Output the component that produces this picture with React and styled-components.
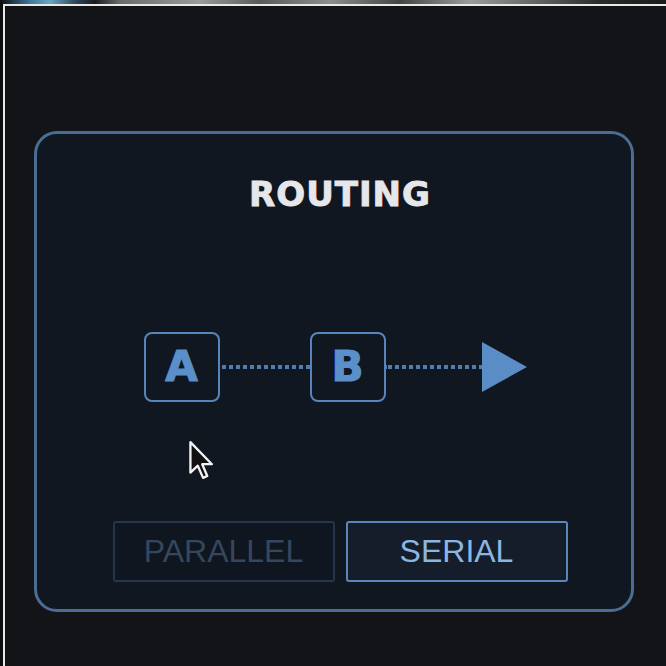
import styled, { createGlobalStyle } from 'styled-components';

const GlobalStyle = createGlobalStyle`
  html, body {
    margin: 0;
    padding: 0;
    background: #131418;
  }
`;

const Frame = styled.div`
  position: relative;
  width: 666px;
  height: 666px;
  box-sizing: border-box;
  padding: 4px 0 0 3px;
  display: flex;
  overflow: hidden;
  background:
    linear-gradient(90deg, #0d0e10 0px, #3f7898 30px, #6aa6c2 50px, #2c4a5c 75px, #1a1b1d 95px,
      #6b6b6b 120px, #9a9a9a 200px, #5a5a5a 260px, #8c8c8c 330px, #444 400px, #9b9b9b 470px,
      #606060 540px, #2a2a2a 600px, #1b1b1b 666px) top / 100% 4px no-repeat,
    #0d0e10;
`;

const Screen = styled.div`
  flex: 1;
  border-top: 2px solid #e9e9ea;
  border-left: 2px solid #e9e9ea;
  background: #131418;
  padding: 125px 0 0 29px;
`;

const Panel = styled.section`
  width: 600px;
  height: 481px;
  box-sizing: border-box;
  border: 3px solid #4a6d96;
  border-radius: 23px;
  background: #111720;
  padding: 43px 0 27px 12px;
  display: flex;
  flex-direction: column;
  align-items: center;
`;

const Title = styled.h2`
  margin: 0;
  font-family: "DejaVu Sans", "Liberation Sans", sans-serif;
  font-weight: 700;
  font-size: 34px;
  line-height: 34px;
  letter-spacing: 1px;
  color: #e6e7ea;
  -webkit-text-stroke: 0.9px #e6e7ea;
`;

const Diagram = styled.div`
  margin: 121px 10px 0 0;
  display: flex;
  align-items: center;
`;

const Node = styled.div`
  width: 76px;
  height: 70px;
  box-sizing: border-box;
  border: 2.5px solid #5685bb;
  border-radius: 8px;
  display: flex;
  align-items: center;
  justify-content: center;
  font-family: "DejaVu Sans", "Liberation Sans", sans-serif;
  font-weight: 700;
  font-size: 42px;
  line-height: 1;
  color: #5b8fcb;
  -webkit-text-stroke: 1.2px #5b8fcb;
`;

const Dots = styled.div`
  width: ${(p) => p.$w}px;
  height: 4px;
  background: repeating-linear-gradient(90deg, #4f7db2 0 4px, transparent 4px 7px);
  background-position: 2px 0;
`;

const Buttons = styled.div`
  margin-top: auto;
  display: flex;
  gap: 11px;
`;

const ModeButton = styled.button`
  width: 222px;
  height: 61px;
  box-sizing: border-box;
  border-radius: 3px;
  border: 2px solid ${(p) => (p.$active ? '#5b87b8' : '#26354a')};
  background: ${(p) => (p.$active ? '#141d29' : '#10161f')};
  color: ${(p) => (p.$active ? '#8cb6e2' : '#34475e')};
  font-family: "Liberation Sans", Arial, sans-serif;
  font-size: 32px;
  padding: 0;
  cursor: pointer;
`;

const Cursor = styled.svg`
  position: absolute;
  left: 187px;
  top: 440px;
`;

const Arrow = () => (
  <svg width="45" height="50" viewBox="0 0 45 50">
    <polygon points="0,0 45,25 0,50" fill="#5a8cc6" />
  </svg>
);

export default function App() {
  return (
    <>
      <GlobalStyle />
      <Frame>
        <Screen>
          <Panel>
            <Title>ROUTING</Title>
            <Diagram>
              <Node>A</Node>
              <Dots $w={90} />
              <Node>B</Node>
              <Dots $w={96} />
              <Arrow />
            </Diagram>
            <Buttons>
              <ModeButton>PARALLEL</ModeButton>
              <ModeButton $active>SERIAL</ModeButton>
            </Buttons>
          </Panel>
        </Screen>
        <Cursor width="30" height="40" viewBox="0 0 13 19">
          <path
            d="M1 1 L1 15.5 L4.5 12.2 L7 18 L9 17.1 L6.6 11.5 L11.2 11.5 Z"
            fill="#111"
            stroke="#f2f2f2"
            strokeWidth="1.1"
            strokeLinejoin="round"
          />
        </Cursor>
      </Frame>
    </>
  );
}
